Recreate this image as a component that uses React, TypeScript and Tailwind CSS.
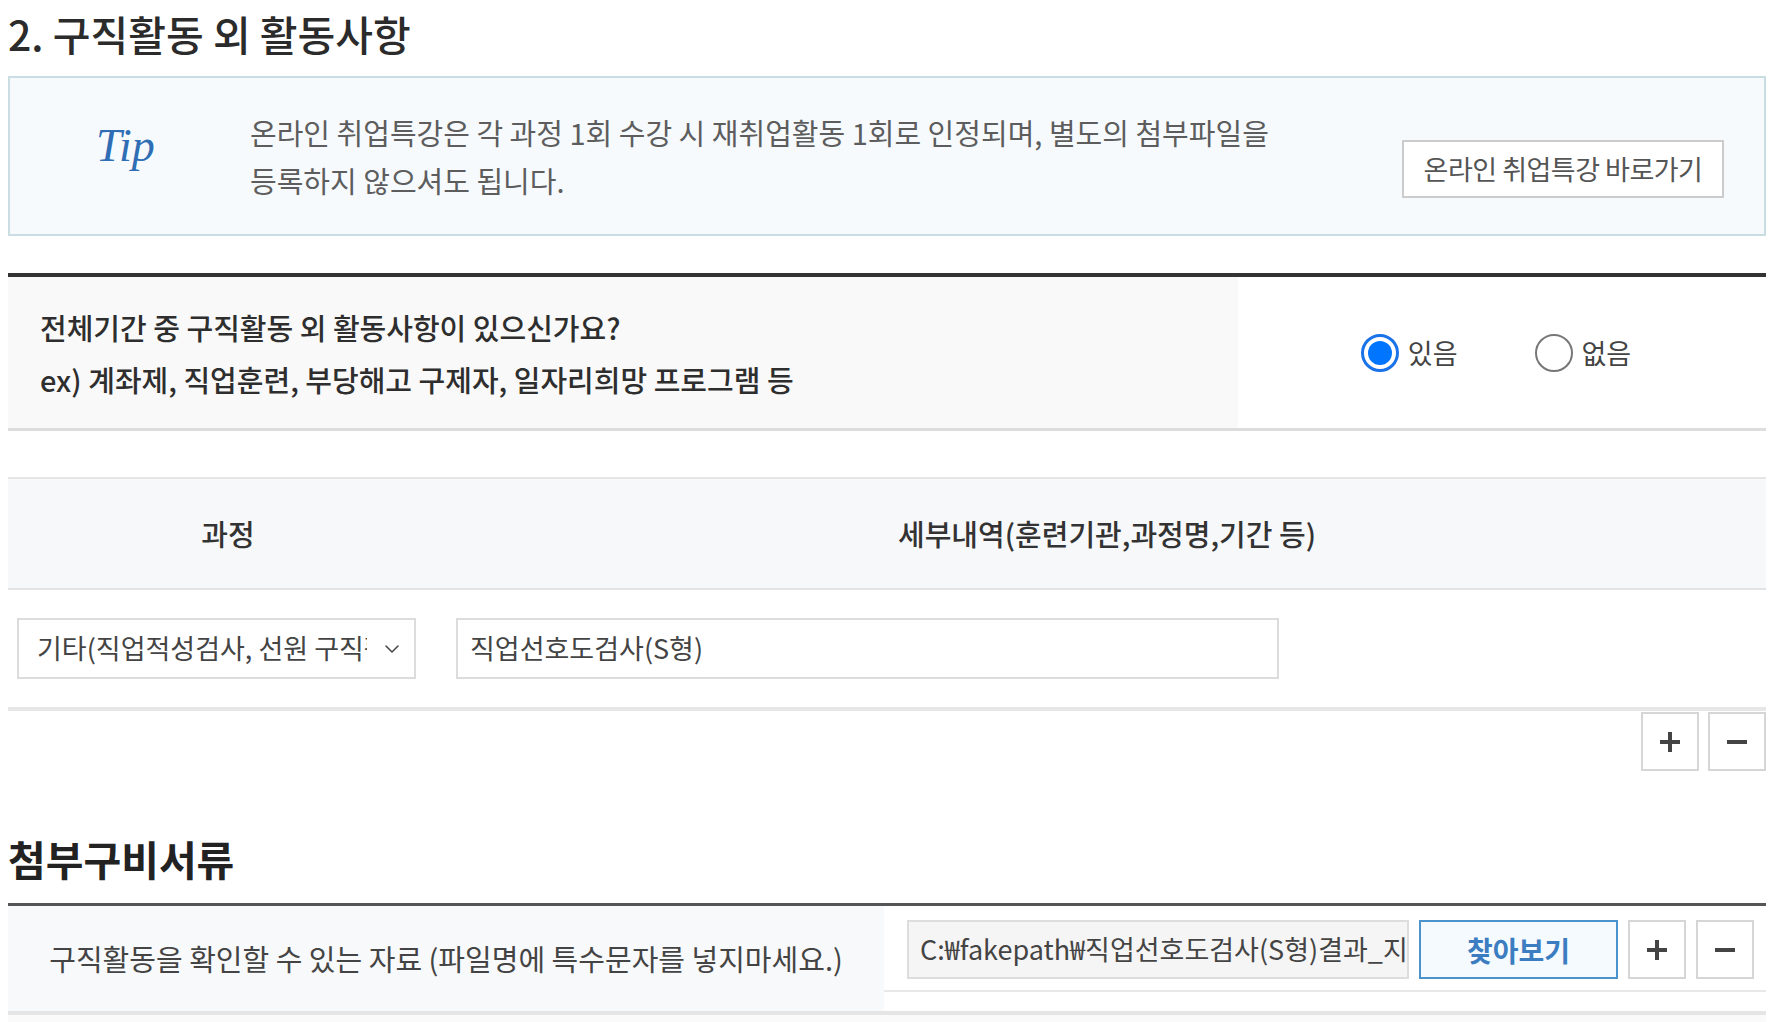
import { ChevronDown } from 'lucide-react';

function Radio({ checked, label }: { checked: boolean; label: string }) {
  return (
    <label className="flex items-center gap-[9px]">
      <span
        className={`w-[38px] h-[38px] rounded-full flex items-center justify-center bg-white ${
          checked ? 'border-[3px] border-[#1a73e8]' : 'border-2 border-[#777777]'
        }`}
      >
        {checked && <span className="w-[24px] h-[24px] rounded-full bg-[#0075ff]" />}
      </span>
      <span className="text-[27px] leading-none text-[#444]">{label}</span>
    </label>
  );
}

function SquareButton({ minus }: { minus?: boolean }) {
  return (
    <button className="w-[58px] h-[59px] border-2 border-[#d6d6d6] bg-white flex items-center justify-center">
      <svg width="22" height="22" viewBox="0 0 22 22">
        <line x1="1" y1="11" x2="21" y2="11" stroke="#444" strokeWidth="4" />
        {!minus && <line x1="11" y1="1" x2="11" y2="21" stroke="#444" strokeWidth="4" />}
      </svg>
    </button>
  );
}

export default function App() {
  return (
    <div className="min-h-screen bg-white font-['Noto_Sans_CJK_KR','Noto_Sans',sans-serif] text-[#333]">
      <div className="ml-2 w-[1758px]">
        {/* Section title */}
        <h2 className="pt-2 text-[41px] leading-[50px] font-medium text-[#2b2b2b]">2. 구직활동 외 활동사항</h2>

        {/* Tip box */}
        <div className="mt-[18px] h-[160px] border-2 border-[#c9dde3] bg-[#f6fafd] flex items-center">
          <div className="w-[240px] pl-[86px] mb-[20px]">
            <span className="font-['Liberation_Serif',serif] italic text-[46px] leading-none text-[#2f6db5]">Tip</span>
          </div>
          <p className="whitespace-nowrap text-[29px] leading-[48px] text-[#5d5d5d]">
            온라인 취업특강은 각 과정 1회 수강 시 재취업활동 1회로 인정되며, 별도의 첨부파일을
            <br />
            등록하지 않으셔도 됩니다.
          </p>
          <button className="ml-auto mr-[40px] mt-[26px] w-[322px] h-[58px] border-2 border-[#cccccc] bg-white text-[27px] tracking-[-0.5px] text-[#555]">
            온라인 취업특강 바로가기
          </button>
        </div>

        {/* Question row */}
        <div className="mt-[37px] h-[158px] flex border-t-4 border-[#333] border-b-[3px] border-b-[#dddddd]">
          <div className="w-[1230px] bg-[#f9f9f9] pl-8 flex flex-col justify-center text-[29px] leading-[52px] font-medium text-[#2e2e2e]">
            <p>전체기간 중 구직활동 외 활동사항이 있으신가요?</p>
            <p>ex) 계좌제, 직업훈련, 부당해고 구제자, 일자리희망 프로그램 등</p>
          </div>
          <div className="flex-1 flex items-center justify-center gap-[77px] pr-[12px]">
            <Radio checked label="있음" />
            <Radio checked={false} label="없음" />
          </div>
        </div>

        {/* Activity table */}
        <div className="mt-[46px] border-t-2 border-[#e5e5e5]">
          <div className="grid grid-cols-[440px_1fr] h-[111px] bg-[#f7f8fa] border-b-2 border-[#e3e3e3] text-[29px] font-medium text-[#333]">
            <div className="flex items-center justify-center">과정</div>
            <div className="flex items-center justify-center">세부내역(훈련기관,과정명,기간 등)</div>
          </div>
          <div className="grid grid-cols-[440px_1fr] h-[121px] items-center border-b-4 border-[#e6e6e6]">
            <div className="pl-[9px]">
              <div className="w-[399px] h-[61px] border-2 border-[#dcdcdc] bg-white flex items-center pl-[18px] pr-[10px]">
                <span className="w-[330px] overflow-hidden whitespace-nowrap text-[27px] text-[#444]">
                  기타(직업적성검사, 선원 구직활동 등)
                </span>
                <ChevronDown className="ml-auto w-[24px] h-[24px] text-[#444]" strokeWidth={1.5} />
              </div>
            </div>
            <div className="pl-[8px]">
              <div className="w-[823px] h-[61px] border-2 border-[#dcdcdc] bg-white flex items-center pl-[12px] text-[27px] text-[#444]">
                직업선호도검사(S형)
              </div>
            </div>
          </div>
          <div className="flex justify-end gap-[9px] mt-[1px]">
            <SquareButton />
            <SquareButton minus />
          </div>
        </div>

        {/* Attachments */}
        <h3 className="mt-[62px] text-[41px] leading-[50px] font-semibold text-[#222]">첨부구비서류</h3>
        <div className="mt-[20px] h-[112px] flex border-t-[3px] border-[#555] border-b-4 border-b-[#e5e5e5]">
          <div className="w-[876px] bg-[#f8f9fa] flex items-center justify-center text-[29px] text-[#444]">
            구직활동을 확인할 수 있는 자료 (파일명에 특수문자를 넣지마세요.)
          </div>
          <div className="flex-1 bg-white">
            <div className="pt-[14px] pb-[11px] pl-[23px] flex items-center gap-[10px] border-b-2 border-[#e8e8e8]">
              <div className="w-[502px] h-[59px] border-2 border-[#dddddd] bg-[#f5f5f5] flex items-center pl-[11px] overflow-hidden whitespace-nowrap text-[27px] text-[#444]">
                C:₩fakepath₩직업선호도검사(S형)결과_지도.pdf
              </div>
              <button className="w-[199px] h-[59px] border-2 border-[#4b93cc] bg-[#f5faff] text-[28px] font-semibold text-[#3b7dc0]">
                찾아보기
              </button>
              <SquareButton />
              <SquareButton minus />
            </div>
          </div>
        </div>
        <div className="h-[20px] bg-[#fafafa]" />
      </div>
    </div>
  );
}
